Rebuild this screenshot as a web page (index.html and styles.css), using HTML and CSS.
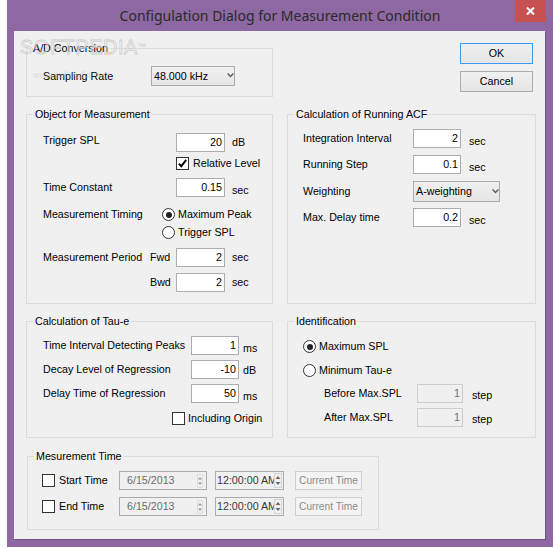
FILE: index.html
```html
<!DOCTYPE html>
<html lang="en">
<head>
<meta charset="utf-8">
<title>Configulation Dialog for Measurement Condition</title>
<link rel="stylesheet" href="styles.css">
</head>
<body>
<div class="window">
  <div class="titlebar">
    <div class="title">Configulation Dialog for Measurement Condition</div>
    <div class="close">
      <svg width="9" height="8" viewBox="0 0 9 8"><path d="M1 0.5 L8 7.5 M8 0.5 L1 7.5" stroke="#fff" stroke-width="2" fill="none"/></svg>
    </div>
  </div>
  <div class="client">

    <div class="row row-a">
      <div class="group g-left g-ad">
        <div class="gtitle">A/D Conversion</div>
        <div class="line ad1">
          <span class="lbl w-ad">Sampling Rate</span>
          <div class="combo c-rate"><span>48.000 kHz</span><svg class="arrow" width="7" height="5" viewBox="0 0 7 5"><path d="M0.6 0.6 L3.5 3.6 L6.4 0.6" fill="none" stroke="#5a5a5a" stroke-width="1.4"/></svg></div>
        </div>
      </div>
      <div class="buttons">
        <div class="btn btn-ok">OK</div>
        <div class="btn">Cancel</div>
      </div>
    </div>

    <div class="row row-b">
      <div class="group g-left g-obj">
        <div class="gtitle">Object for Measurement</div>
        <div class="line o1">
          <span class="lbl w-o">Trigger SPL</span>
          <div class="edit e-o">20</div>
          <span class="unit u3 gap-o">dB</span>
        </div>
        <div class="line short o2">
          <div class="check on"><svg width="11" height="11" viewBox="0 0 11 11"><path d="M1.8 5.6 L4.3 8.2 L9.2 1.8" fill="none" stroke="#000" stroke-width="1.9"/></svg></div>
          <span class="ctext">Relative Level</span>
        </div>
        <div class="line o3">
          <span class="lbl w-o">Time Constant</span>
          <div class="edit e-o">0.15</div>
          <span class="unit u6 gap-o">sec</span>
        </div>
        <div class="line short o4">
          <span class="lbl w-timing">Measurement Timing</span>
          <div class="radio on"></div>
          <span class="rtext">Maximum Peak</span>
        </div>
        <div class="line short o5">
          <div class="radio"></div>
          <span class="rtext">Trigger SPL</span>
        </div>
        <div class="line o6">
          <span class="lbl w-period">Measurement Period</span>
          <span class="lbl w-dir">Fwd</span>
          <div class="edit e-o">2</div>
          <span class="unit u3 gap-o">sec</span>
        </div>
        <div class="line o7">
          <span class="lbl w-dir">Bwd</span>
          <div class="edit e-o">2</div>
          <span class="unit u3 gap-o">sec</span>
        </div>
      </div>

      <div class="group g-right g-acf">
        <div class="gtitle">Calculation of Running ACF</div>
        <div class="line a1">
          <span class="lbl w-a">Integration Interval</span>
          <div class="edit e-a">2</div>
          <span class="unit u6 gap-a">sec</span>
        </div>
        <div class="line a2">
          <span class="lbl w-a">Running Step</span>
          <div class="edit e-a">0.1</div>
          <span class="unit u6 gap-a">sec</span>
        </div>
        <div class="line a3">
          <span class="lbl w-a">Weighting</span>
          <div class="combo c-weight"><span>A-weighting</span><svg class="arrow" width="7" height="5" viewBox="0 0 7 5"><path d="M0.6 0.6 L3.5 3.6 L6.4 0.6" fill="none" stroke="#5a5a5a" stroke-width="1.4"/></svg></div>
        </div>
        <div class="line a4">
          <span class="lbl w-a">Max. Delay time</span>
          <div class="edit e-a">0.2</div>
          <span class="unit u6 gap-a">sec</span>
        </div>
      </div>
    </div>

    <div class="row row-c">
      <div class="group g-left g-tau">
        <div class="gtitle">Calculation of Tau-e</div>
        <div class="line t1">
          <span class="lbl w-t">Time Interval Detecting Peaks</span>
          <div class="edit e-t">1</div>
          <span class="unit u6 gap-t">ms</span>
        </div>
        <div class="line t2">
          <span class="lbl w-t">Decay Level of Regression</span>
          <div class="edit e-t">-10</div>
          <span class="unit u4 gap-t">dB</span>
        </div>
        <div class="line t3">
          <span class="lbl w-t">Delay Time of Regression</span>
          <div class="edit e-t">50</div>
          <span class="unit u6 gap-t">ms</span>
        </div>
        <div class="line short t4">
          <div class="check"></div>
          <span class="ctext ct-t">Including Origin</span>
        </div>
      </div>

      <div class="group g-right g-id">
        <div class="gtitle">Identification</div>
        <div class="line short i1">
          <div class="radio on"></div>
          <span class="rtext">Maximum SPL</span>
        </div>
        <div class="line short i2">
          <div class="radio"></div>
          <span class="rtext">Minimum Tau-e</span>
        </div>
        <div class="line i3">
          <span class="lbl w-i">Before Max.SPL</span>
          <div class="edit e-i disabled">1</div>
          <span class="unit u5 gap-i">step</span>
        </div>
        <div class="line i4">
          <span class="lbl w-i">After Max.SPL</span>
          <div class="edit e-i disabled">1</div>
          <span class="unit u5 gap-i">step</span>
        </div>
      </div>
    </div>

    <div class="row row-d">
      <div class="group g-time">
        <div class="gtitle">Mesurement Time</div>
        <div class="line m1">
          <div class="check"></div>
          <span class="ctext w-m">Start Time</span>
          <div class="dtp dtp-date"><span>6/15/2013</span>
            <svg class="spin" width="6" height="14" viewBox="0 0 6 14"><rect x="0.5" y="0.5" width="5" height="13" fill="none" stroke="#dedede"/><path d="M1 5.5 L3 3 L5 5.5 Z M1 8.5 L3 11 L5 8.5 Z" fill="#9c9c9c"/></svg>
          </div>
          <div class="dtp dtp-time"><span>12:00:00 AM</span>
            <svg class="spin spin-t" width="8" height="15" viewBox="0 0 8 15"><rect x="0" y="0" width="8" height="15" fill="#f0f0f0"/><rect x="0.5" y="0.5" width="7" height="14" fill="none" stroke="#d4d4d4"/><path d="M1.5 6 L4 3 L6.5 6 Z M1.5 9 L4 12 L6.5 9 Z" fill="#6a6a6a"/></svg>
          </div>
          <div class="btn btn-dis">Current Time</div>
        </div>
        <div class="line m2">
          <div class="check"></div>
          <span class="ctext w-m">End Time</span>
          <div class="dtp dtp-date"><span>6/15/2013</span>
            <svg class="spin" width="6" height="14" viewBox="0 0 6 14"><rect x="0.5" y="0.5" width="5" height="13" fill="none" stroke="#dedede"/><path d="M1 5.5 L3 3 L5 5.5 Z M1 8.5 L3 11 L5 8.5 Z" fill="#9c9c9c"/></svg>
          </div>
          <div class="dtp dtp-time"><span>12:00:00 AM</span>
            <svg class="spin spin-t" width="8" height="15" viewBox="0 0 8 15"><rect x="0" y="0" width="8" height="15" fill="#f0f0f0"/><rect x="0.5" y="0.5" width="7" height="14" fill="none" stroke="#d4d4d4"/><path d="M1.5 6 L4 3 L6.5 6 Z M1.5 9 L4 12 L6.5 9 Z" fill="#6a6a6a"/></svg>
          </div>
          <div class="btn btn-dis">Current Time</div>
        </div>
      </div>
    </div>

    <div class="wm">SOFTPEDIA<span class="tm">™</span></div>
    <div class="wm-url">www.softpedia.com</div>
  </div>
</div>
</body>
</html>
```

FILE: styles.css
```css
* { box-sizing: border-box; }
html, body { margin: 0; padding: 0; background: #ffffff; }
body {
  font-family: "Liberation Sans", Arial, sans-serif;
  font-size: 10.7px;
  line-height: 13px;
  color: #000;
}

.window {
  margin-left: 7px;
  width: 546px;
  height: 547px;
  background: #8d68a2;
}

.titlebar { height: 31px; position: relative; }
.title {
  font-family: "Noto Sans", "Open Sans", sans-serif;
  font-size: 14px;
  line-height: 31px;
  text-align: center;
  color: #2a2a2a;
}
.close {
  position: absolute;
  right: 7px;
  top: 0;
  width: 31px;
  height: 22px;
  background: #c75050;
  display: flex;
  align-items: center;
  justify-content: center;
}

.client {
  position: relative;
  margin-left: 7px;
  width: 531px;
  height: 508px;
  background: #f0f0f0;
  box-shadow: 1px 1px 0 #6f5083;
  padding: 12px 0 0 12px;
}

.row { display: flex; align-items: flex-start; }
.row-b { margin-top: 17px; gap: 14px; }
.row-c { margin-top: 17px; gap: 14px; }
.row-d { margin-top: 18px; }

.group { border: 1px solid #dcdcdc; }
.gtitle {
  margin: -7px 0 0 6px;
  padding: 0 2px;
  width: max-content;
  height: 13px;
  background: #f0f0f0;
}
.g-ad .gtitle { margin-left: 4px; }

.g-left { width: 247px; }
.g-right { width: 249px; }
.g-ad { margin-top: 5px; height: 49px; }
.g-obj, .g-acf { height: 190px; }
.g-tau, .g-id { height: 117px; }
.g-time { margin-left: 1px; width: 352px; height: 74px; }

.buttons {
  margin-left: 187px;
  display: flex;
  flex-direction: column;
  gap: 7px;
}
.btn {
  width: 73px;
  height: 21px;
  border: 1px solid #acacac;
  background: linear-gradient(#f0f0f0, #e5e5e5);
  display: flex;
  align-items: center;
  justify-content: center;
}
.btn-ok { border-color: #3c9af0; }
.btn-dis {
  width: 67px;
  height: 19px;
  margin-left: 11px;
  border-color: #cfcfcf;
  background: #f4f4f4;
  color: #8b8b8b;
  font-size: 10.2px;
}

.line { display: flex; align-items: center; height: 19px; }
.line.short { height: 13px; }
.lbl { flex: none; white-space: nowrap; }
.unit { align-self: flex-start; }
.u3 { margin-top: 3px; }
.u4 { margin-top: 4px; }
.u5 { margin-top: 5px; }
.u6 { margin-top: 6px; }

.edit {
  flex: none;
  height: 19px;
  border: 1px solid #abadb3;
  background: #fff;
  text-align: right;
  padding-right: 2px;
  line-height: 17px;
}
.edit.disabled { background: #f0f0f0; border-color: #cccccc; color: #6d6d6d; }

.combo {
  flex: none;
  display: flex;
  align-items: center;
  border: 1px solid #acacac;
  background: linear-gradient(#f0f0f0, #e5e5e5);
  padding-left: 2px;
}
.combo .arrow { margin-left: auto; margin-right: 0; margin-top: -1px; }

.check {
  flex: none;
  width: 13px;
  height: 13px;
  border: 1px solid #333;
  background: #fff;
  display: flex;
  align-items: center;
  justify-content: center;
}
.radio {
  flex: none;
  width: 13px;
  height: 13px;
  border: 1px solid #333;
  border-radius: 50%;
  background: #fff;
  display: flex;
  align-items: center;
  justify-content: center;
}
.radio.on::after {
  content: "";
  width: 6px;
  height: 6px;
  border-radius: 50%;
  background: #222;
}
.ctext { margin-left: 4px; white-space: nowrap; }
.ct-t { margin-left: 3px; }
.rtext { margin-left: 3px; white-space: nowrap; }

/* A/D */
.ad1 { margin-top: 11px; height: 20px; padding-left: 16px; }
.w-ad { width: 108px; }
.c-rate { width: 84px; height: 20px; }

/* Object for Measurement */
.o1, .o2, .o3, .o4, .o6 { padding-left: 16px; }
.o1 { margin-top: 12px; }
.o1 .lbl { align-self: flex-start; margin-top: 1px; }
.o2 { margin-top: 5px; padding-left: 149px; }
.o3 { margin-top: 8px; }
.o4 { margin-top: 11px; }
.o5 { margin-top: 5px; padding-left: 135px; }
.o6 { margin-top: 9px; }
.o7 { margin-top: 6px; padding-left: 123px; }
.w-o { width: 133px; }
.w-timing { width: 119px; }
.w-period { width: 107px; }
.w-dir { width: 26px; }
.e-o { width: 49px; }
.gap-o { margin-left: 7px; }

/* ACF */
.a1, .a2, .a3, .a4 { padding-left: 15px; }
.a1 { margin-top: 8px; }
.a2 { margin-top: 7px; }
.a3 { margin-top: 7px; height: 21px; }
.a4 { margin-top: 6px; }
.w-a { width: 110px; }
.e-a { width: 48px; }
.gap-a { margin-left: 8px; }
.c-weight { width: 87px; height: 21px; }

/* Tau-e */
.t1, .t2, .t3 { padding-left: 16px; }
.t1 { margin-top: 8px; }
.t2 { margin-top: 5px; }
.t3 { margin-top: 5px; }
.t4 { margin-top: 9px; padding-left: 145px; }
.w-t { width: 148px; }
.e-t { width: 48px; }
.gap-t { margin-left: 4px; }

/* Identification */
.i1, .i2 { padding-left: 15px; }
.i1 { margin-top: 12px; }
.i2 { margin-top: 11px; }
.i3, .i4 { padding-left: 36px; }
.i3 { margin-top: 7px; }
.i4 { margin-top: 5px; }
.w-i { width: 93px; }
.e-i { width: 46px; }
.gap-i { margin-left: 9px; }

/* Measurement Time */
.m1, .m2 { padding-left: 14px; }
.m1 { margin-top: 8px; }
.m2 { margin-top: 7px; }
.w-m { width: 60px; }
.dtp {
  flex: none;
  height: 19px;
  border: 1px solid #adadad;
  background: #f0f0f0;
  display: flex;
  align-items: center;
  overflow: hidden;
  white-space: nowrap;
  position: relative;
}
.dtp-date { width: 88px; padding-left: 7px; color: #6d6d6d; }
.dtp-date .spin { margin-left: auto; margin-right: 3px; }
.dtp-time { width: 69px; margin-left: 8px; padding-left: 1px; color: #3a3a3a; }
.dtp-time .spin-t { position: absolute; right: 1px; top: 1px; }

/* watermark */
.wm {
  position: absolute;
  left: 6px;
  top: 6px;
  font-size: 20px;
  line-height: 20px;
  letter-spacing: 0.5px;
  color: rgba(255, 255, 255, 0.4);
  -webkit-text-stroke: 0.8px rgba(195, 195, 195, 0.8);
  pointer-events: none;
}
.wm .tm { font-size: 8px; vertical-align: top; -webkit-text-stroke: 0; color: #c8c8c8; }
.wm-url {
  position: absolute;
  left: 19px;
  top: 38px;
  font-size: 9px;
  color: rgba(190, 190, 190, 0.45);
  pointer-events: none;
}
```
